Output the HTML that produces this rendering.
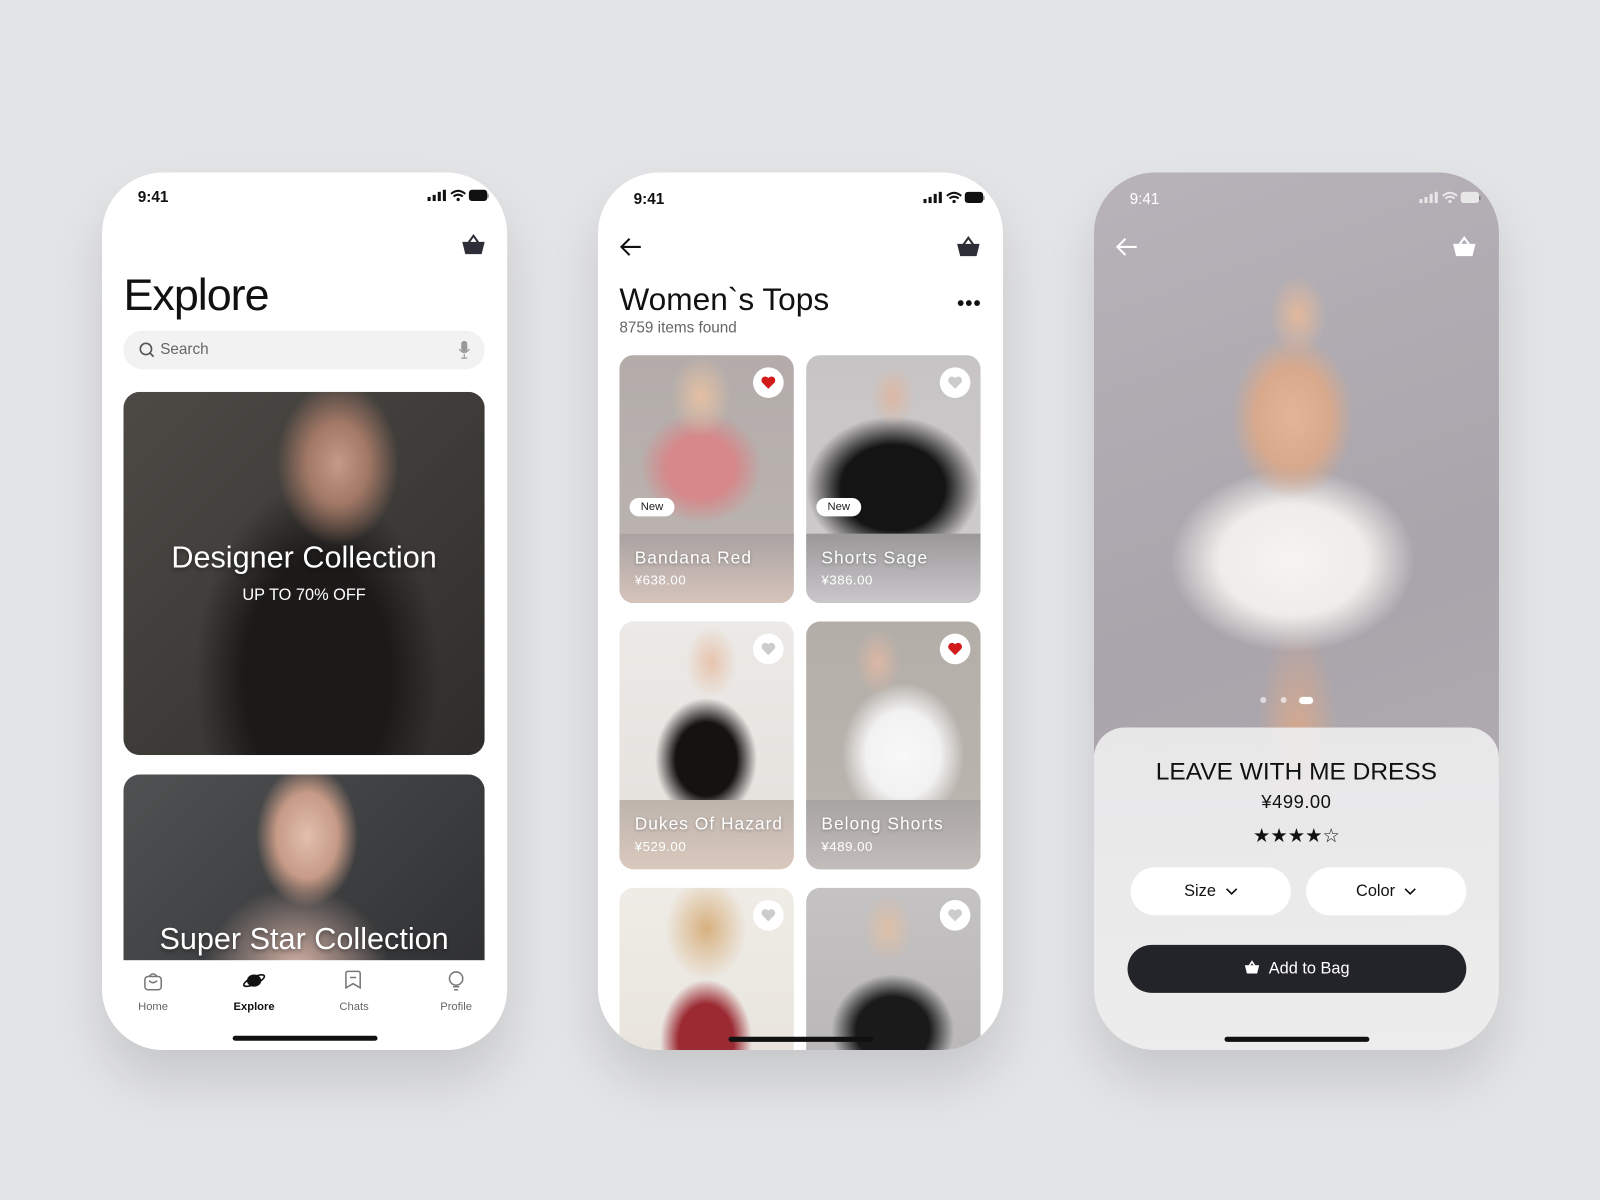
<!DOCTYPE html>
<html><head><meta charset="utf-8"><style>
*{margin:0;padding:0;box-sizing:border-box}
body{width:1600px;height:1200px;background:#e3e4e6;overflow:hidden;font-family:"Liberation Sans",sans-serif}
#w{position:absolute;left:0;top:0;width:1568px;height:1176px;transform:scale(1.0204);transform-origin:0 0}
.ph{position:absolute;top:169px;width:397px;height:860px;border-radius:60px;background:#fff;overflow:hidden;box-shadow:0 30px 50px rgba(0,0,0,.12)}
.ab{position:absolute}
.time{position:absolute;top:16px;left:35px;font-size:15px;font-weight:bold;color:#111}
.stat{position:absolute;top:16px;right:18px}
.card{position:absolute;border-radius:14px;overflow:hidden}
.nm{position:absolute;left:15px;color:#fff;font-size:17px;letter-spacing:1px;text-shadow:0 1px 3px rgba(0,0,0,.3)}
.pr{position:absolute;left:15px;color:#fff;font-size:13px;letter-spacing:.5px}
.hrt{position:absolute;right:10px;top:12px;width:30px;height:30px;border-radius:50%;background:#fff;display:flex;align-items:center;justify-content:center}
.new{position:absolute;left:10px;top:140px;background:#fff;border-radius:10px;font-size:11px;padding:3px 11px;color:#222}
.tab{position:absolute;top:40px;font-size:11px;color:#666;width:60px;text-align:center}
.hi{position:absolute;height:5px;border-radius:3px;background:#111}
</style></head><body><div id="w">
<svg width="0" height="0" style="position:absolute"><defs>
<symbol id="bk" viewBox="0 0 24 22"><path d="M7 9 L12 2 L17 9" stroke="#2d2e38" stroke-width="2" fill="none"/><path d="M1 8 H23 L20 20 H4 Z" fill="#2d2e38"/></symbol>
<symbol id="st" viewBox="0 0 60 14"><rect x="0" y="8" width="3" height="4" fill="#111"/><rect x="5" y="6" width="3" height="6" fill="#111"/><rect x="10" y="3" width="3" height="9" fill="#111"/><rect x="15" y="1" width="3" height="11" fill="#111"/><path d="M23 5 Q30 -1 37 5 M25.5 7.5 Q30 4 34.5 7.5" stroke="#111" stroke-width="2" fill="none"/><circle cx="30" cy="10.5" r="1.6" fill="#111"/><rect x="41" y="1.5" width="17" height="10" rx="2.5" fill="#111" stroke="#111"/><rect x="58.5" y="5" width="1.5" height="4" fill="#888"/></symbol>
</defs></svg>

<!-- PHONE 1 -->
<div class="ph" style="left:100px">
 <div class="time">9:41</div>
 <svg class="stat" width="60" height="14"><use href="#st"/></svg>
 <svg class="ab" style="left:352px;top:60px" width="24" height="22"><use href="#bk"/></svg>
 <div class="ab" style="left:21px;top:96px;font-size:44px;color:#111;letter-spacing:-1px">Explore</div>
 <div class="ab" style="left:21px;top:155px;width:354px;height:38px;border-radius:19px;background:#f2f2f2">
  <svg class="ab" style="left:15px;top:11px" width="16" height="16"><circle cx="7" cy="7" r="5.5" stroke="#555" stroke-width="1.6" fill="none"/><path d="M11 11 L14.5 14.5" stroke="#555" stroke-width="1.6"/></svg>
  <div class="ab" style="left:36px;top:10px;font-size:15px;color:#666">Search</div>
  <svg class="ab" style="right:14px;top:10px" width="12" height="18"><rect x="3" y="0" width="6" height="11" rx="3" fill="#999"/><path d="M1 8 Q6 15 11 8 M6 13 V17 M3 17 H9" stroke="#999" stroke-width="1.2" fill="none"/></svg>
 </div>
 <div class="card" style="left:21px;top:215px;width:354px;height:356px;border-radius:16px;background:radial-gradient(ellipse 60px 80px at 210px 70px,#c49b86 0,#a27866 50%,transparent 100%),radial-gradient(ellipse 120px 190px at 190px 280px,#1c1a19 0,#1c1a19 60%,transparent 100%),linear-gradient(135deg,#4d4a46,#2f2d2b)">
  <div class="ab" style="left:0;width:354px;top:146px;text-align:center;color:#fff;font-size:30px;text-shadow:0 2px 4px rgba(0,0,0,.4)">Designer Collection</div>
  <div class="ab" style="left:0;width:354px;top:191px;text-align:center;color:#fff;font-size:16px">UP TO 70% OFF</div>
 </div>
 <div class="card" style="left:21px;top:590px;width:354px;height:200px;border-radius:16px;background:radial-gradient(ellipse 50px 70px at 180px 60px,#e2bfae 0,#c69a86 60%,transparent 100%),radial-gradient(ellipse 90px 80px at 170px 190px,#d4b2a6 0,transparent 100%),linear-gradient(135deg,#4f5152,#2f3032)">
  <div class="ab" style="left:0;width:354px;top:145px;text-align:center;color:#fff;font-size:30px;text-shadow:0 2px 4px rgba(0,0,0,.4)">Super Star Collection</div>
 </div>
 <div class="ab" style="left:0;top:772px;width:397px;height:88px;background:#fff">
  <svg class="ab" style="left:40px;top:11px" width="20" height="20"><rect x="2" y="5" width="16" height="13" rx="3" stroke="#777" stroke-width="1.5" fill="none"/><path d="M6 9 Q10 13 14 9 M6 5 Q10 0 14 5" stroke="#777" stroke-width="1.5" fill="none"/></svg>
  <div class="tab" style="left:20px">Home</div>
  <svg class="ab" style="left:138px;top:10px" width="22" height="20"><ellipse cx="11" cy="10" rx="7" ry="6" fill="#111"/><ellipse cx="11" cy="10" rx="11" ry="3.5" transform="rotate(-25 11 10)" stroke="#111" stroke-width="1.6" fill="none"/></svg>
  <div class="tab" style="left:119px;color:#111;font-weight:bold">Explore</div>
  <svg class="ab" style="left:237px;top:10px" width="18" height="20"><path d="M2 3 Q2 1 4 1 H14 Q16 1 16 3 V17 L9 13 L2 17 Z" stroke="#777" stroke-width="1.5" fill="none"/><path d="M6 7 H12" stroke="#777" stroke-width="1.5"/></svg>
  <div class="tab" style="left:217px">Chats</div>
  <svg class="ab" style="left:337px;top:10px" width="20" height="22"><circle cx="10" cy="8" r="6.5" stroke="#777" stroke-width="1.5" fill="none"/><path d="M7 16 H13 M8 19 H12" stroke="#777" stroke-width="1.5"/></svg>
  <div class="tab" style="left:317px">Profile</div>
 </div>
 <div class="hi" style="left:128px;top:846px;width:142px"></div>
</div>

<!-- PHONE 2 -->
<div class="ph" style="left:586px">
 <div class="time" style="top:18px">9:41</div>
 <svg class="stat" style="top:18px" width="60" height="14"><use href="#st"/></svg>
 <svg class="ab" style="left:20px;top:63px" width="24" height="20"><path d="M22 10 H3 M11 2 L3 10 L11 18" stroke="#111" stroke-width="2" fill="none"/></svg>
 <svg class="ab" style="left:351px;top:62px" width="24" height="22"><use href="#bk"/></svg>
 <div class="ab" style="left:21px;top:107px;font-size:31px;color:#111">Women`s Tops</div>
 <div class="ab" style="left:21px;top:144px;font-size:15px;color:#666">8759 items found</div>
 <div class="ab" style="left:352px;top:125px;font-size:20px;letter-spacing:1px;font-weight:bold;color:#111;line-height:8px">•••</div>

 <div class="card" style="left:21px;top:179px;width:171px;height:243px;background:radial-gradient(ellipse 30px 40px at 80px 40px,#e4c0a4,transparent),radial-gradient(ellipse 60px 55px at 80px 110px,#d6888a,#d6888a 55%,transparent 100%),linear-gradient(#b3acaa,#b9b2ae 70%,#c8b7ae)">
  <div class="ab" style="left:0;top:175px;width:171px;height:68px;background:linear-gradient(#a9a2a1,#d6c4bc)"></div>
  <div class="hrt"><svg width="16" height="14"><path d="M8 13 L2 7 A3.5 3.5 0 0 1 8 2.5 A3.5 3.5 0 0 1 14 7 Z" fill="#d11a1a"/></svg></div>
  <div class="new">New</div>
  <div class="nm" style="top:189px">Bandana Red</div><div class="pr" style="top:213px">¥638.00</div>
 </div>
 <div class="card" style="left:204px;top:179px;width:171px;height:243px;background:radial-gradient(ellipse 22px 30px at 85px 40px,#dcb8a4,transparent),radial-gradient(ellipse 85px 70px at 85px 130px,#141414,#141414 60%,transparent 100%),linear-gradient(#c7c4c5,#cfcccd)">
  <div class="ab" style="left:0;top:175px;width:171px;height:68px;background:linear-gradient(#9a9899,#c9c7ca)"></div>
  <div class="hrt"><svg width="16" height="14"><path d="M8 13 L2 7 A3.5 3.5 0 0 1 8 2.5 A3.5 3.5 0 0 1 14 7 Z" fill="#ccc"/></svg></div>
  <div class="new">New</div>
  <div class="nm" style="top:189px">Shorts Sage</div><div class="pr" style="top:213px">¥386.00</div>
 </div>
 <div class="card" style="left:21px;top:440px;width:171px;height:243px;background:radial-gradient(ellipse 25px 35px at 90px 40px,#e7c4ae,transparent),radial-gradient(ellipse 50px 60px at 85px 135px,#151312,#151312 60%,transparent 100%),linear-gradient(#ece9e6,#e4e0dc)">
  <div class="ab" style="left:0;top:175px;width:171px;height:68px;background:linear-gradient(#bdb4ad,#dac8bd)"></div>
  <div class="hrt"><svg width="16" height="14"><path d="M8 13 L2 7 A3.5 3.5 0 0 1 8 2.5 A3.5 3.5 0 0 1 14 7 Z" fill="#ccc"/></svg></div>
  <div class="nm" style="top:189px">Dukes Of Hazard</div><div class="pr" style="top:213px">¥529.00</div>
 </div>
 <div class="card" style="left:204px;top:440px;width:171px;height:243px;background:radial-gradient(ellipse 22px 32px at 70px 40px,#dbb7a5,transparent),radial-gradient(ellipse 60px 70px at 95px 130px,#f8f8f8,#f2f2f2 60%,transparent 100%),linear-gradient(#b4aea8,#bcb6b0)">
  <div class="ab" style="left:0;top:175px;width:171px;height:68px;background:linear-gradient(#a8a4a1,#c2bdbb)"></div>
  <div class="hrt"><svg width="16" height="14"><path d="M8 13 L2 7 A3.5 3.5 0 0 1 8 2.5 A3.5 3.5 0 0 1 14 7 Z" fill="#d11a1a"/></svg></div>
  <div class="nm" style="top:189px">Belong Shorts</div><div class="pr" style="top:213px">¥489.00</div>
 </div>
 <div class="card" style="left:21px;top:701px;width:171px;height:200px;background:radial-gradient(ellipse 40px 50px at 85px 40px,#d7b07f,transparent),radial-gradient(ellipse 45px 60px at 85px 150px,#9b2a33,#9b2a33 60%,transparent 100%),linear-gradient(#efece6,#e7e2dc)">
  <div class="hrt"><svg width="16" height="14"><path d="M8 13 L2 7 A3.5 3.5 0 0 1 8 2.5 A3.5 3.5 0 0 1 14 7 Z" fill="#ccc"/></svg></div>
 </div>
 <div class="card" style="left:204px;top:701px;width:171px;height:200px;background:radial-gradient(ellipse 25px 35px at 80px 40px,#ddbfa8,transparent),radial-gradient(ellipse 60px 55px at 85px 140px,#1a1a1a,#1a1a1a 60%,transparent 100%),linear-gradient(#c4c2c3,#b7b5b6)">
  <div class="hrt"><svg width="16" height="14"><path d="M8 13 L2 7 A3.5 3.5 0 0 1 8 2.5 A3.5 3.5 0 0 1 14 7 Z" fill="#ccc"/></svg></div>
 </div>
 <div class="hi" style="left:128px;top:847px;width:142px"></div>
</div>

<!-- PHONE 3 -->
<div class="ph" style="left:1072px;background:radial-gradient(ellipse 28px 40px at 200px 140px,#e2b89c,transparent),radial-gradient(ellipse 60px 80px at 195px 240px,#e3b596,#d9a98c 60%,transparent 100%),radial-gradient(ellipse 120px 90px at 195px 380px,#f6f4f1,#efedea 60%,transparent 100%),radial-gradient(ellipse 40px 120px at 200px 560px,#d8a88c,transparent),linear-gradient(160deg,#b7b3b9,#a9a4ab 50%,#b6b2b5)">
 <div class="time" style="top:18px;color:#fff;font-weight:normal">9:41</div>
 <svg class="stat" style="top:18px;opacity:.9" width="60" height="14"><g style="filter:invert(1)"><use href="#st"/></g></svg>
 <svg class="ab" style="left:20px;top:63px" width="24" height="20"><path d="M22 10 H3 M11 2 L3 10 L11 18" stroke="#fff" stroke-width="2" fill="none"/></svg>
 <svg class="ab" style="left:351px;top:62px" width="24" height="22"><path d="M7 9 L12 2 L17 9" stroke="#fff" stroke-width="2" fill="none"/><path d="M1 8 H23 L20 20 H4 Z" fill="#fff"/></svg>
 <div class="ab" style="left:163px;top:514px;width:6px;height:6px;border-radius:3px;background:rgba(255,255,255,.6)"></div>
 <div class="ab" style="left:183px;top:514px;width:6px;height:6px;border-radius:3px;background:rgba(255,255,255,.6)"></div>
 <div class="ab" style="left:201px;top:514px;width:14px;height:7px;border-radius:4px;background:#fff"></div>
 <div class="ab" style="left:0;top:544px;width:397px;height:316px;border-radius:30px 30px 0 0;background:linear-gradient(rgba(236,236,237,.93),rgba(240,240,240,.95))">
  <div class="ab" style="left:0;width:397px;top:30px;text-align:center;font-size:24px;color:#111">LEAVE WITH ME DRESS</div>
  <div class="ab" style="left:0;width:397px;top:63px;text-align:center;font-size:18px;color:#111;letter-spacing:.5px">¥499.00</div>
  <div class="ab" style="left:0;width:397px;top:95px;text-align:center;font-size:19px;color:#111;font-family:'DejaVu Sans',sans-serif">★★★★☆</div>
  <div class="ab" style="left:36px;top:137px;width:157px;height:47px;border-radius:24px;background:#fff;text-align:center;line-height:47px;font-size:16px;color:#111">Size &nbsp;<svg width="12" height="8"><path d="M1 1 L6 6 L11 1" stroke="#111" stroke-width="1.6" fill="none"/></svg></div>
  <div class="ab" style="left:208px;top:137px;width:157px;height:47px;border-radius:24px;background:#fff;text-align:center;line-height:47px;font-size:16px;color:#111">Color &nbsp;<svg width="12" height="8"><path d="M1 1 L6 6 L11 1" stroke="#111" stroke-width="1.6" fill="none"/></svg></div>
  <div class="ab" style="left:33px;top:213px;width:332px;height:47px;border-radius:24px;background:#23242a;text-align:center;line-height:47px;font-size:16px;color:#fff"><svg width="16" height="14" style="vertical-align:-1px"><path d="M5 6 L8 1.5 L11 6" stroke="#fff" stroke-width="1.6" fill="none"/><path d="M1 5 H15 L13 13 H3 Z" fill="#fff"/></svg>&nbsp; Add to Bag</div>
 </div>
 <div class="hi" style="left:128px;top:847px;width:142px"></div>
</div>
</div></body></html>
